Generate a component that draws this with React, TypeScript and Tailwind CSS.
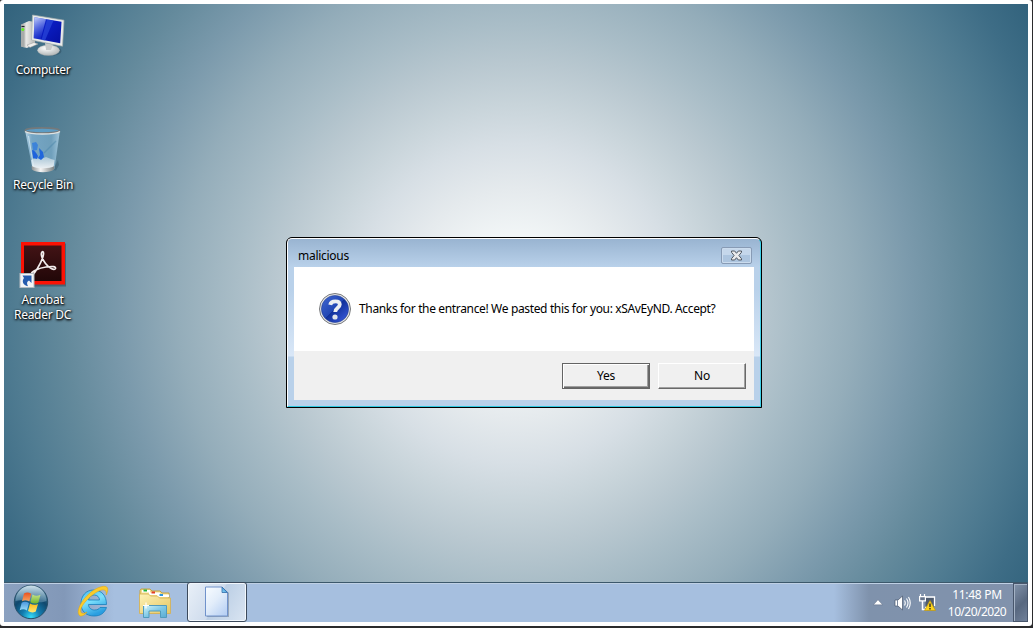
import React from "react";

const FONT = "font-['Noto_Sans','Open_Sans',sans-serif]";

function ComputerIcon() {
  return (
    <svg width="48" height="48" viewBox="0 0 48 48">
      <defs>
        <linearGradient id="scr" x1="0" y1="0" x2="1" y2="1">
          <stop offset="0" stopColor="#1a35d8" />
          <stop offset="0.45" stopColor="#0a1cc0" />
          <stop offset="1" stopColor="#0510a0" />
        </linearGradient>
        <linearGradient id="tower" x1="0" y1="0" x2="1" y2="0">
          <stop offset="0" stopColor="#9a9e9e" />
          <stop offset="0.4" stopColor="#e8e8e6" />
          <stop offset="1" stopColor="#b4b6b4" />
        </linearGradient>
        <radialGradient id="foot" cx="0.4" cy="0.3" r="0.8">
          <stop offset="0" stopColor="#ffffff" />
          <stop offset="1" stopColor="#a9adad" />
        </radialGradient>
        <linearGradient id="shine" x1="0" y1="0" x2="0.3" y2="1">
          <stop offset="0" stopColor="#dfe8ff" stopOpacity="0.9" />
          <stop offset="1" stopColor="#4a66e8" stopOpacity="0.2" />
        </linearGradient>
      </defs>
      <ellipse cx="31" cy="40" rx="11.500" ry="5" fill="#2c4a5c" opacity="0.5" />
      <path d="M2 13.500l8-3.500 6 1v22l-8 4-6-1.500z" fill="url(#tower)" />
      <path d="M2 13.500l3.500 1v22l-3.500-1z" fill="#a8abaa" />
      <circle cx="3.800" cy="18.500" r="1.500" fill="#66ee22" />
      <path d="M2.500 15.500h3" stroke="#222" strokeWidth="1" />
      <path d="M8 34l7-2.500 4 1.500-8 3.500z" fill="#f0f0ee" stroke="#999" strokeWidth="0.500" />
      <ellipse cx="29.500" cy="39.300" rx="11" ry="5.200" fill="url(#foot)" stroke="#b3b7b7" strokeWidth="0.400" />
      <path d="M26 32l8 1.500-2 5.500h-5z" fill="#c6c9c9" />
      <path d="M13.500 4l31.500 5.200-1.500 26L12.500 29z" fill="#e8ebea" stroke="#a9b0b0" strokeWidth="0.700" />
      <path d="M15.500 6.300l27 4.500-1.300 21.400-26.500-4.900z" fill="url(#scr)" />
      <path d="M15.500 6.300l11.500 2-5.500 20.300-6.800-1.300z" fill="url(#shine)" />
      <path d="M28 8.500l6.500 1-8.500 20-3.500-.6z" fill="#3150e0" opacity="0.600" />
    </svg>
  );
}

function BinIcon() {
  return (
    <svg width="48" height="48" viewBox="0 0 48 48">
      <defs>
        <linearGradient id="glass" x1="0" y1="0" x2="1" y2="0">
          <stop offset="0" stopColor="#c3e0f2" stopOpacity="0.9" />
          <stop offset="0.2" stopColor="#84b5d6" stopOpacity="0.75" />
          <stop offset="0.75" stopColor="#7db0d0" stopOpacity="0.65" />
          <stop offset="1" stopColor="#b2d4e8" stopOpacity="0.85" />
        </linearGradient>
        <linearGradient id="base" x1="0" y1="0" x2="1" y2="0">
          <stop offset="0" stopColor="#8b9090" />
          <stop offset="0.4" stopColor="#f5f5f5" />
          <stop offset="1" stopColor="#7b8080" />
        </linearGradient>
        <linearGradient id="ice" x1="0" y1="0" x2="0" y2="1">
          <stop offset="0" stopColor="#e6edf1" stopOpacity="0.5" />
          <stop offset="1" stopColor="#f6f7f8" />
        </linearGradient>
      </defs>
      <path d="M34 44l5-10 1 5-3 5.500z" fill="#34576a" opacity="0.45" />
      <path d="M6 4h35l-5.500 39c-4 3.500-18 3.500-22 0z" fill="url(#glass)" />
      <path d="M12 34l5-2 5 1 5-2 5 2 3.500 1-1 8c-4 2.500-17 2.500-21 0z" fill="url(#ice)" />
      <path d="M12.500 40c5 3 18 3 23 0l-.6 3.500c-4 3.500-18 3.500-22 0z" fill="url(#base)" />
      <path d="M13 17l4-1 2 3-1 5-4 1z" fill="#2b78e0" opacity="0.75" />
      <path d="M13 24c2 0 4 2 6 6l-1 3-4-1z" fill="#1f63dc" />
      <path d="M20 22l4 4 1 5-3 3-3-2 2-3z" fill="#2066dc" />
      <path d="M37 15L25 27" stroke="#4d87ab" strokeWidth="1.500" opacity="0.500" />
      <path d="M9.500 10l5 30" stroke="#e2f2fb" strokeWidth="1.200" opacity="0.600" />
      <ellipse cx="23.300" cy="4.500" rx="17" ry="2.600" fill="#5c9cc4" stroke="#74797b" strokeWidth="1.800" />
      <path d="M6 5.500c5 3.300 30 3.300 35 0" fill="none" stroke="#dfe3e3" strokeWidth="1.400" />
    </svg>
  );
}

function AcrobatIcon() {
  return (
    <svg width="48" height="48" viewBox="0 0 48 48" className="-mt-px mb-px">
      <defs>
        <linearGradient id="acr" x1="0" y1="0" x2="0" y2="1">
          <stop offset="0" stopColor="#421315" />
          <stop offset="1" stopColor="#210708" />
        </linearGradient>
      </defs>
      <rect x="3" y="3.500" width="44" height="43" fill="#25414f" opacity="0.5" />
      <rect x="2" y="2" width="44" height="42.500" fill="#fb1204" />
      <rect x="5" y="5.500" width="37.500" height="35.500" fill="url(#acr)" />
      <path d="M12 34.500c0-3 8-6.500 15-7.500s10-.5 9.500 1.500c-1 2.500-7-1-10-5s-4.500-8.500-4-10.500c.7-2.300 2.300-1.500 2 1-.4 5-5.500 14-8.500 18-1.500 2.500-4 4-4 2.500z" fill="none" stroke="#f3eded" strokeWidth="1.700" />
      <rect x="1" y="33.500" width="14" height="14" fill="#f4f5f6" stroke="#b5bcc2" />
      <path d="M5 38l-1.500-2.500H12.500V43L10 40.500c-2.300 1.300-2.500 3-1 5.700-5-.8-6.500-5-4-8.200z" fill="#255cae" />
    </svg>
  );
}

function DesktopIcon({ children, label, className }: { children: React.ReactNode; label: string[]; className: string }) {
  return (
    <div className={`flex h-[115px] w-[78px] flex-col items-center ${className}`}>
      {children}
      <div className="mt-[3px] text-center text-[12px] leading-[15px] tracking-[-0.28px] whitespace-nowrap text-white [text-shadow:1px_1px_2px_#000,0_1px_3px_#000]">
        {label.map((l) => (
          <div key={l}>{l}</div>
        ))}
      </div>
    </div>
  );
}

function StartOrb() {
  return (
    <svg width="38" height="38" viewBox="0 0 38 38">
      <defs>
        <radialGradient id="orb" cx="0.5" cy="0.95" r="0.9">
          <stop offset="0" stopColor="#35dcf8" />
          <stop offset="0.3" stopColor="#137db0" />
          <stop offset="0.65" stopColor="#11486d" />
          <stop offset="1" stopColor="#4c7f9d" />
        </radialGradient>
        <linearGradient id="gloss" x1="0" y1="0" x2="0" y2="1">
          <stop offset="0" stopColor="#e5f1f8" stopOpacity="0.85" />
          <stop offset="1" stopColor="#78a6c0" stopOpacity="0.45" />
        </linearGradient>
        <linearGradient id="fr" x1="0" y1="0" x2="0" y2="1"><stop offset="0" stopColor="#e9501d" /><stop offset="1" stopColor="#f7a661" /></linearGradient>
        <linearGradient id="fg" x1="0" y1="0" x2="0" y2="1"><stop offset="0" stopColor="#c5e288" /><stop offset="1" stopColor="#6fb52b" /></linearGradient>
        <linearGradient id="fb" x1="0" y1="0" x2="0" y2="1"><stop offset="0" stopColor="#4c98df" /><stop offset="1" stopColor="#9bdcf7" /></linearGradient>
        <linearGradient id="fy" x1="0" y1="0" x2="0" y2="1"><stop offset="0" stopColor="#fbb916" /><stop offset="1" stopColor="#fde878" /></linearGradient>
      </defs>
      <circle cx="19" cy="19" r="16.700" fill="url(#orb)" stroke="#284f68" strokeWidth="1" />
      <path d="M3.500 18a15.500 15.500 0 0 1 31 0c-9 4-22-3-31 0z" fill="url(#gloss)" />
      <path d="M12 10.500c2.500-1.500 4.500-1.300 7.300.2l-2 7.800c-2.500-1.600-4.800-1.600-7.300-.2z" fill="url(#fr)" />
      <path d="M20.500 11.500c2.500 1.500 5 1.700 8 .2l-2.200 8c-2.800 1.400-5.300 1-8-.4z" fill="url(#fg)" />
      <path d="M9.700 19.800c2.500-1.400 4.500-1.300 7.200.3l-2 7.400c-2.400-1.500-4.700-1.600-7.200-.2z" fill="url(#fb)" />
      <path d="M18 20.600c2.500 1.500 5 1.700 8 .3l-2.200 7.500c-2.800 1.500-5 1.200-7.800-.3z" fill="url(#fy)" />
    </svg>
  );
}

function ExplorerE() {
  return (
    <svg width="34" height="34" viewBox="0 0 34 34">
      <defs>
        <linearGradient id="ie" x1="0" y1="0" x2="0.4" y2="1">
          <stop offset="0" stopColor="#4bbcf0" />
          <stop offset="0.5" stopColor="#7ce0fb" />
          <stop offset="1" stopColor="#2a9ee0" />
        </linearGradient>
      </defs>
      <path fillRule="evenodd" d="M17.500 5c8 0 13 5.500 13 14.500H12.500c0 3.500 3 5.500 6 5.500 3 0 4.500-1 5.500-2.500h6.500c-2 6-6.500 8.500-12.500 8.500C10 31 5 26 5 18.500S10 5 17.500 5zM12.500 15H23.500c0-3-2.300-5-5.300-5s-5.300 2-5.700 5z" fill="url(#ie)" stroke="#167dbd" strokeWidth="0.800" />
      <path d="M3.500 30.500C-.5 27 5 15 14.500 7.500 22 1.500 30 -.5 31.500 3c.8 2-.3 5-1.300 7 .2-3-.2-4.600-2-5C24.500 4 18.500 8 12.500 13.500 6 19.500 3 26 5.500 28c1.500 1 3.500.2 5.500-1C8.500 30.500 5 32 3.500 30.500z" fill="#fbcb2b" stroke="#e0a30f" strokeWidth="0.500" />
    </svg>
  );
}

function FolderIcon() {
  return (
    <svg width="36" height="34" viewBox="0 0 36 34">
      <defs>
        <linearGradient id="fold" x1="0" y1="0" x2="1" y2="1">
          <stop offset="0" stopColor="#fdf2b7" />
          <stop offset="1" stopColor="#e6c763" />
        </linearGradient>
        <linearGradient id="lib" x1="0" y1="0" x2="1" y2="1">
          <stop offset="0" stopColor="#d4f5fb" />
          <stop offset="0.5" stopColor="#80c9e6" />
          <stop offset="1" stopColor="#5aabd2" />
        </linearGradient>
      </defs>
      <path d="M3 27V4.500l1-1.500h9l2 2h8l2 2h7v20z" fill="#f2dc8b" stroke="#c5a142" />
      <path d="M5 4h8v2.500H5zM12 6.500h11V9H12zM20 8.500h12V11H20z" fill="#fff" />
      <path d="M6.500 3.500h3.500v2H6.500z" fill="#21b33a" />
      <path d="M14.500 5.500H18v2h-3.500z" fill="#e23e28" />
      <path d="M22.500 8h3.500v2h-3.500z" fill="#2d96df" />
      <path d="M2.500 8h9l2 2h7l2 2h11v15.500h-31z" fill="url(#fold)" stroke="#d3b054" strokeWidth="0.800" />
      <path d="M6.500 19.500h23v12h-6V25H12v6.500H6.500z" fill="url(#lib)" stroke="#519bbd" />
      <path d="M9 16.500v6M6 19.500h6" stroke="#fff" strokeWidth="1.200" />
    </svg>
  );
}

function FileIcon() {
  return (
    <svg width="26" height="32" viewBox="0 0 26 32">
      <defs>
        <linearGradient id="pg" x1="0" y1="0" x2="0.8" y2="1">
          <stop offset="0" stopColor="#f8fcff" />
          <stop offset="0.5" stopColor="#e2edfa" />
          <stop offset="1" stopColor="#b9d1f4" />
        </linearGradient>
        <linearGradient id="foldc" x1="0" y1="1" x2="1" y2="0">
          <stop offset="0" stopColor="#8fd8f8" />
          <stop offset="1" stopColor="#1f78c8" />
        </linearGradient>
      </defs>
      <path d="M3 2h16l6 5v24H3z" fill="#667386" opacity="0.5" />
      <path d="M1.500 1h16.500l5.500 5.500v23.500h-22z" fill="url(#pg)" stroke="#7092cb" />
      <path d="M18 1l5.500 5.500H18z" fill="url(#foldc)" stroke="#316ca9" strokeWidth="0.800" />
    </svg>
  );
}

function SpeakerIcon() {
  return (
    <svg width="18" height="16" viewBox="0 0 18 16">
      <path d="M1 5h3l4.500-4v14L4 11H1z" fill="#fff" stroke="#46536a" strokeWidth="0.700" />
      <path d="M3.500 5v6" stroke="#7c899d" />
      <path d="M10.500 5.500q1.500 2.500 0 5M12.500 3.500q3 4.500 0 9M14.500 2q3.500 6 0 12" fill="none" stroke="#fff" strokeWidth="1.100" />
    </svg>
  );
}

function NetworkIcon() {
  return (
    <svg width="17" height="18" viewBox="0 0 17 18">
      <path d="M6.500 3.500h8.500v10H6.500z" fill="#4e5b70" />
      <path d="M7 3h8.500v9M6 13.500h4" fill="none" stroke="#fff" strokeWidth="1.300" />
      <path d="M1.500 0v3M5.500 0v3" stroke="#fff" strokeWidth="1.200" />
      <path d="M.6 2.600h5.800v4.300H.6z" fill="#69778f" stroke="#fff" strokeWidth="1.200" />
      <path d="M3.500 7v8.500H8" fill="none" stroke="#fff" strokeWidth="1.500" />
      <path d="M11 6.500l5.500 10h-11z" fill="#fbd31b" stroke="#bd9610" strokeWidth="0.700" />
      <path d="M11 9.500v3.500M11 14v1.500" stroke="#222" strokeWidth="1.300" />
    </svg>
  );
}

function QuestionIcon() {
  return (
    <svg width="34" height="34" viewBox="0 0 34 34">
      <defs>
        <linearGradient id="q" x1="0" y1="0" x2="1" y2="1">
          <stop offset="0" stopColor="#4269d2" />
          <stop offset="0.49" stopColor="#2146b4" />
          <stop offset="0.5" stopColor="#10309a" />
          <stop offset="1" stopColor="#3f60e4" />
        </linearGradient>
      </defs>
      <circle cx="17" cy="17" r="15.500" fill="#e4e5e6" stroke="#77797c" strokeWidth="1" />
      <circle cx="17" cy="17" r="13.600" fill="url(#q)" stroke="#1a3688" strokeWidth="0.500" />
      <path d="M12.200 12.800c.5-2.800 2.500-3.500 5.200-3.500 2.700 0 4.400 1.200 4.400 3.300 0 3.200-4.600 3-4.600 7.400" fill="none" stroke="#eceef2" strokeWidth="3.800" />
      <circle cx="17" cy="25" r="2.600" fill="#dfe3ea" />
    </svg>
  );
}

function Dialog() {
  return (
    <div className="absolute top-[233px] left-[282px] flex h-[171px] w-[476px] flex-col rounded-t-[6px] border border-black bg-black">
      <div className="flex min-h-0 flex-1 flex-col rounded-t-[5px] border border-t-white border-r-[#3fd0e8] border-b-[#2fc8e0] border-l-white bg-[linear-gradient(180deg,#99b4d1_0,#b9d1ea_28px,#b9d1ea_50px,#d9e7f7_117px,#b9d1ea_118px)] px-[6px] pb-[6px] text-black">
        <div className="flex h-7 shrink-0 items-start justify-between pr-[2px] pl-1">
          <span className="pt-[9px] text-[12px] leading-4 tracking-[-0.28px]">malicious</span>
          <button aria-label="Close" className="mt-2 flex h-[17px] w-[31px] items-center justify-center rounded-[2px] border border-[#889bb5] bg-[linear-gradient(#c5d7eb_50%,#adc5df_50%)] shadow-[inset_0_0_0_1px_#cbdcee]">
            <svg width="13" height="11" viewBox="0 0 13 11">
              <path d="M1.500 1h3.200l1.800 2.300L8.300 1h3.200v1.300L8.900 5.500l2.600 3.200V10H8.300L6.500 7.700 4.700 10H1.500V8.700l2.600-3.200-2.600-3.200z" fill="#e9eaec" stroke="#515862" strokeWidth="1" />
            </svg>
          </button>
        </div>
        <div className="flex h-[84px] shrink-0 items-center gap-[7px] bg-white pl-6">
          <QuestionIcon />
          <p className="text-[12px] leading-4 tracking-[-0.35px] whitespace-nowrap">Thanks for the entrance! We pasted this for you: xSAvEyND. Accept?</p>
        </div>
        <div className="flex flex-1 items-start justify-end gap-2 bg-[#f0f0f0] pt-3 pr-2">
          <button className="h-[26px] w-[88px] border border-[#646464] bg-[#f0f0f0] text-[12px] leading-4 tracking-[-0.2px] shadow-[inset_1px_1px_0_#fff,inset_-1px_-1px_0_#696969,inset_-2px_-2px_0_#a0a0a0]">Yes</button>
          <button className="h-[26px] w-[88px] border border-t-white border-r-[#696969] border-b-[#696969] border-l-white bg-[#f0f0f0] text-[12px] leading-4 tracking-[-0.2px] shadow-[inset_-1px_-1px_0_#a0a0a0]">No</button>
        </div>
      </div>
    </div>
  );
}

export default function App() {
  return (
    <div className={`h-[628px] w-[1033px] overflow-hidden bg-[#2b2b2d] ${FONT}`}>
      <div className="h-[626px] w-[1032px] rounded-[3px] bg-white p-1">
        <div className="relative flex h-[618px] w-[1024px] flex-col overflow-hidden bg-[radial-gradient(circle_at_512px_300px,#fafcfc_0,#f1f5f6_70px,#e5eaed_115px,#d7dfe5_160px,#c8d4da_200px,#b9c8d0_240px,#a9bdc7_280px,#94adba_338px,#7b9aac_395px,#648a9c_450px,#4f7b91_505px,#3e6d86_550px,#30617b_600px)]">
          <div className="flex flex-1 flex-col items-start pt-[7px]">
            <DesktopIcon label={["Computer"]} className=""><ComputerIcon /></DesktopIcon>
            <DesktopIcon label={["Recycle Bin"]} className=""><BinIcon /></DesktopIcon>
            <DesktopIcon label={["Acrobat", "Reader DC"]} className="pr-[1px]"><AcrobatIcon /></DesktopIcon>
          </div>
          <div className="flex h-10 shrink-0 items-start border-t border-[#3c586b] bg-[linear-gradient(90deg,#8ba1c0_0,#8298b8_60px,#a6bfdf_110px,#a6bfdf_830px,#7f92ac_865px,#8192ac_100%)] shadow-[inset_0_1px_0_#bfd0e4]">
            <div className="flex w-[54px] justify-center"><StartOrb /></div>
            <div className="mt-[2px] ml-[18px] flex w-[34px] justify-center"><ExplorerE /></div>
            <div className="mt-[3px] ml-[27px] flex w-9 justify-center"><FolderIcon /></div>
            <div className="-mt-px ml-[14px] flex h-10 w-[60px] items-center justify-center rounded-[3px] border border-[#3c4a5c] bg-[linear-gradient(120deg,#e9f0f8_0,#cfdced_48%,#bccfe5_50%,#dae5f2_100%)] shadow-[inset_0_0_0_1px_#f2f7fc]"><FileIcon /></div>
            <div className="ml-auto flex h-full items-center text-white">
              <svg width="10" height="7" viewBox="0 0 10 7"><path d="M5 .8l4.500 5H.5z" fill="#fff" stroke="#536179" strokeWidth="0.400" /></svg>
              <div className="ml-[11px]"><SpeakerIcon /></div>
              <div className="ml-[7px]"><NetworkIcon /></div>
              <div className="ml-[11px] flex w-[60px] flex-col items-center text-[12px] leading-[17px] whitespace-nowrap">
                <div className="tracking-[-0.3px]">11:48 PM</div>
                <div className="tracking-[-0.55px]">10/20/2020</div>
              </div>
              <div className="ml-[6px] h-[39px] w-[15px] border border-[#48566c] bg-[linear-gradient(135deg,#8293aa,#586880_55%,#708099)] shadow-[inset_1px_1px_0_#a4b2c5]" />
            </div>
          </div>
          <Dialog />
        </div>
      </div>
    </div>
  );
}
